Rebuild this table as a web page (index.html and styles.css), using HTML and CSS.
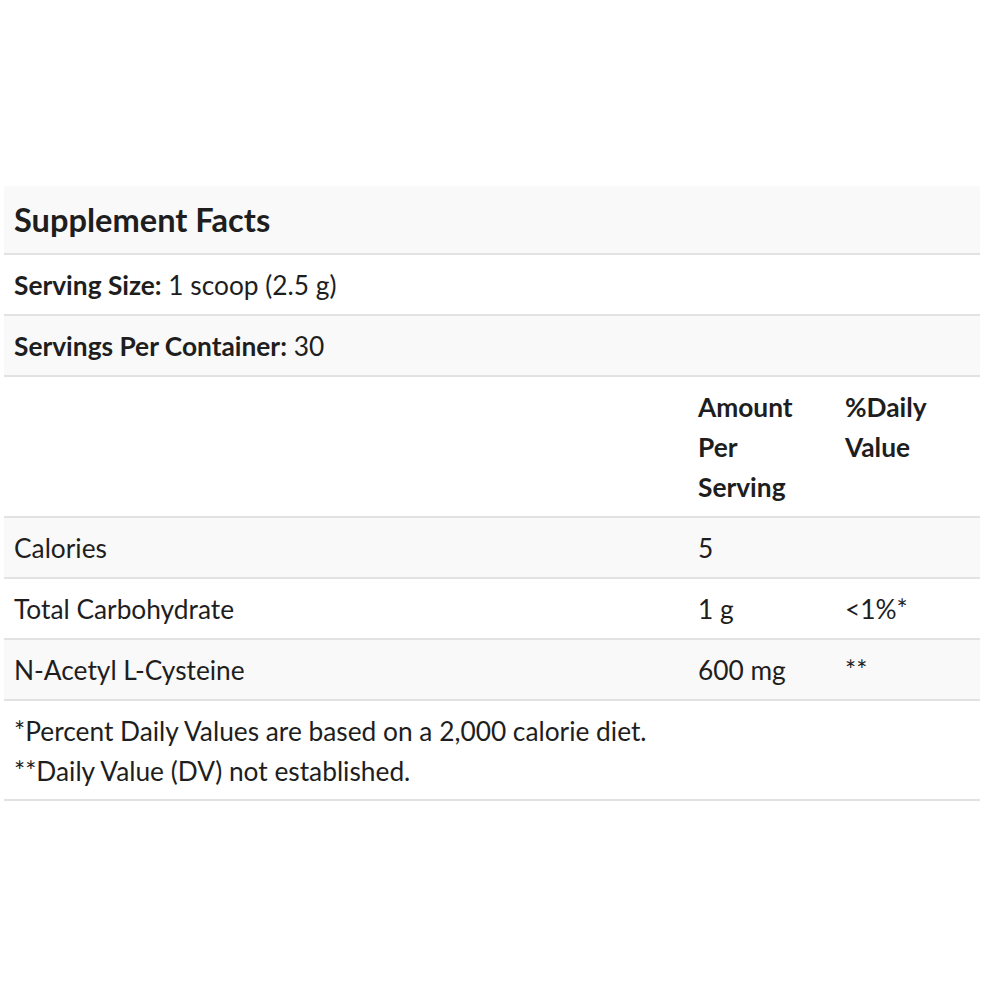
FILE: index.html
```html
<!DOCTYPE html>
<html>
<head>
<meta charset="utf-8">
<link rel="stylesheet" href="styles.css">
</head>
<body>
<div class="facts">
  <div class="row title alt">Supplement Facts</div>
  <div class="row"><b>Serving Size:</b> 1 scoop (2.5 g)</div>
  <div class="row alt"><b>Servings Per Container:</b> 30</div>
  <div class="row grid head">
    <div></div>
    <div class="c2">Amount<br>Per<br>Serving</div>
    <div class="c3">%Daily<br>Value</div>
  </div>
  <div class="row grid alt">
    <div>Calories</div>
    <div class="c2">5</div>
    <div class="c3"></div>
  </div>
  <div class="row grid">
    <div>Total Carbohydrate</div>
    <div class="c2">1 g</div>
    <div class="c3">&lt;1%*</div>
  </div>
  <div class="row grid alt">
    <div>N-Acetyl L-Cysteine</div>
    <div class="c2">600 mg</div>
    <div class="c3">**</div>
  </div>
  <div class="row notes">
    <div>*Percent Daily Values are based on a 2,000 calorie diet.</div>
    <div>**Daily Value (DV) not established.</div>
  </div>
</div>
</body>
</html>
```
FILE: styles.css
```css
html, body {
  margin: 0;
  padding: 0;
  background: #ffffff;
}
body {
  font-family: Lato, "Open Sans", sans-serif;
  color: #1e1e1e;
  font-size: 26.3px;
  line-height: 40px;
}
.facts {
  width: 976px;
  margin: 186px 0 0 4px;
}
.row {
  padding: 10px 10px 9px 10px;
  border-bottom: 2px solid #e2e2e2;
}
.alt {
  background: #f9f9f9;
}
.title {
  font-weight: 700;
  font-size: 32.6px;
  line-height: 48px;
}
b {
  font-weight: 700;
}
.grid {
  display: grid;
  grid-template-columns: 684px 147px 1fr;
}
.head {
  font-weight: 700;
}
.notes {
  padding-bottom: 8px;
}
```
